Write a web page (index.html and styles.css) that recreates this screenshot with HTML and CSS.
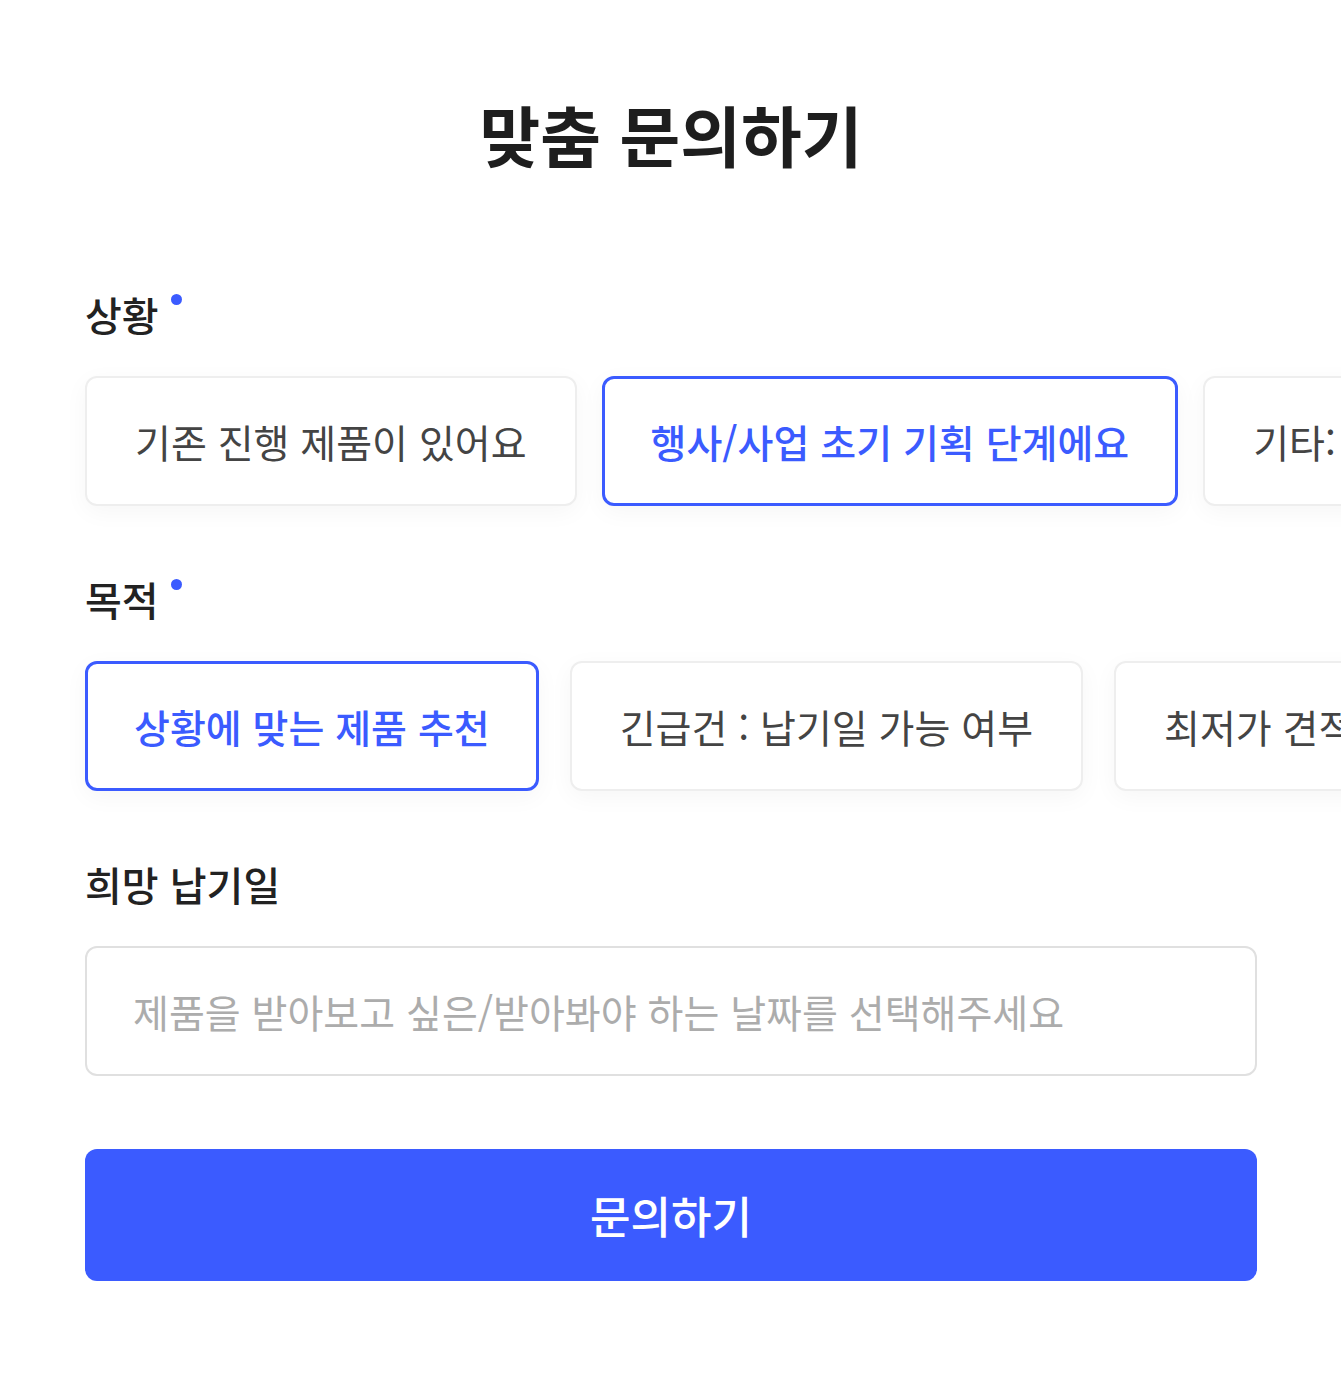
FILE: index.html
```html
<!DOCTYPE html>
<html lang="ko">

<head>
  <meta charset="UTF-8">
  <meta name="viewport" content="width=device-width, initial-scale=1.0">
  <title>맞춤 문의하기</title>
  <link rel="stylesheet" href="styles.css">
</head>

<body>
  <div class="page">
    <h1 class="title">맞춤 문의하기</h1>

    <!-- 상황 -->
    <section class="field">
      <h2 class="label required">상황</h2>
      <div class="chips">
        <button class="chip">기존 진행 제품이 있어요</button>
        <button class="chip on">행사/사업 초기 기획 단계에요</button>
        <button class="chip">기타: 직접 입력</button>
      </div>
    </section>

    <!-- 목적 -->
    <section class="field">
      <h2 class="label required">목적</h2>
      <div class="chips wide">
        <button class="chip on">상황에 맞는 제품 추천</button>
        <button class="chip">긴급건 : 납기일 가능 여부</button>
        <button class="chip">최저가 견적 요청</button>
      </div>
    </section>

    <!-- 희망 납기일 -->
    <section class="field">
      <h2 class="label">희망 납기일</h2>
      <input class="date" type="text" placeholder="제품을 받아보고 싶은/받아봐야 하는 날짜를 선택해주세요">
    </section>

    <button class="submit">문의하기</button>
  </div>
</body>

</html>
```

FILE: styles.css
```css
* {
  padding: 0;
  margin: 0;
  box-sizing: border-box;
}

html,
body {
  overflow-x: hidden;
  background-color: #ffffff;
}

body {
  font-family: "Noto Sans CJK KR", "Noto Sans", sans-serif;
  color: #222222;
}

.page {
  padding: 93px 84px 80px 85px;
  display: flex;
  flex-direction: column;
}

.title {
  text-align: center;
  font-size: 66px;
  font-weight: 700;
  line-height: 80px;
  color: #1e1e1e;
  margin-bottom: 116px;
}

.field {
  display: flex;
  flex-direction: column;
  margin-bottom: 68px;
}

.label {
  font-size: 40px;
  font-weight: 500;
  line-height: 50px;
  color: #222222;
  margin-bottom: 37px;
  position: relative;
  align-self: flex-start;
}

/* 필수 표시 점 */
.label.required::after {
  content: "";
  position: absolute;
  top: 5px;
  right: -23px;
  width: 11px;
  height: 11px;
  border-radius: 50%;
  background-color: #3b5bff;
}

.chips {
  display: flex;
  gap: 25px;
}

.chips.wide {
  gap: 31px;
}

.chip {
  flex-shrink: 0;
  height: 130px;
  padding: 0 48px;
  font-family: inherit;
  font-size: 39px;
  font-weight: 400;
  color: #444444;
  white-space: nowrap;
  background-color: #ffffff;
  border: 2px solid #eeeeee;
  border-radius: 12px;
  box-shadow: 0 6px 24px rgba(0, 0, 0, 0.04);
}

.chip.on {
  padding: 0 46px;
  color: #3b5bff;
  border: 3px solid #3b5bff;
  font-weight: 500;
}

.date {
  height: 130px;
  width: 100%;
  padding: 0 46px;
  font-family: inherit;
  font-size: 39px;
  color: #333333;
  border: 2px solid #e0e0e0;
  border-radius: 12px;
  outline: none;
}

.date::placeholder {
  color: #acacac;
}

.submit {
  margin-top: 5px;
  height: 132px;
  width: 100%;
  font-family: inherit;
  font-size: 44px;
  font-weight: 500;
  color: #ffffff;
  background-color: #3b5bff;
  border: none;
  border-radius: 12px;
}
```
